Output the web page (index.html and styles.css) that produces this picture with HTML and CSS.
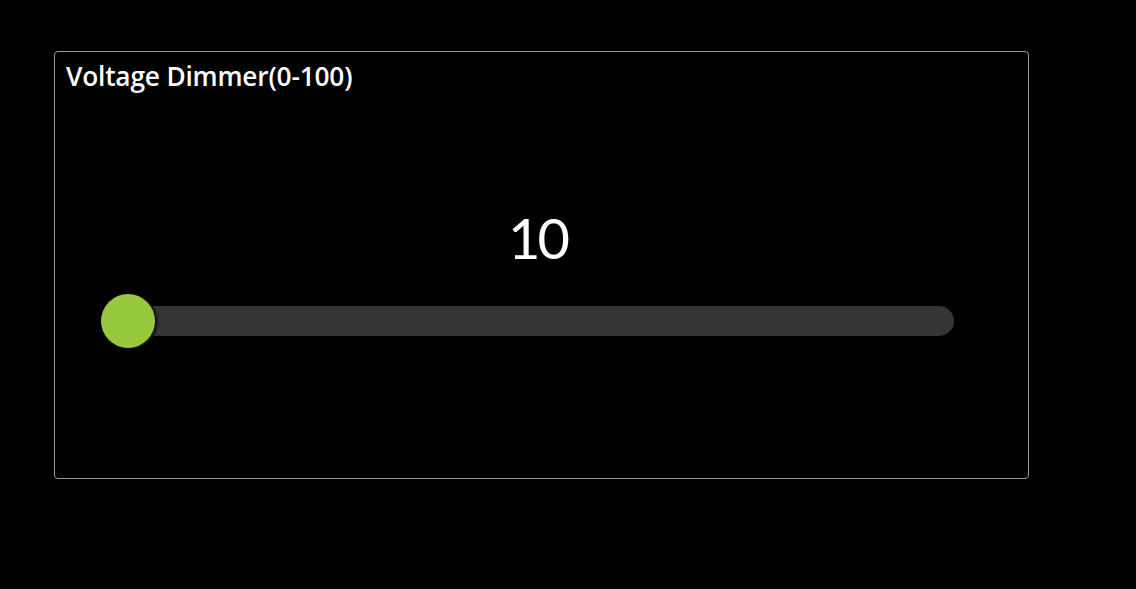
FILE: index.html
```html
<!DOCTYPE html>
<html>
<head>
<meta charset="utf-8">
<link rel="stylesheet" href="styles.css">
</head>
<body>
<div class="card">
  <div class="title">Voltage Dimmer(0-100)</div>
  <div class="value">10</div>
  <div class="slider">
    <div class="track"></div>
    <div class="thumb"></div>
  </div>
</div>
</body>
</html>
```
FILE: styles.css
```css
html, body {
  margin: 0;
  padding: 0;
  background: #000;
}
body {
  padding: 51px 0 0 54px;
  font-family: Lato, "Open Sans", sans-serif;
  color: #fff;
}
.card {
  box-sizing: border-box;
  width: 975px;
  height: 428px;
  border: 1px solid #9a9a9a;
  border-radius: 4px;
  padding: 8px 11px 10px;
}
.title {
  font-family: "Open Sans", sans-serif;
  font-size: 26.3px;
  font-weight: 600;
  line-height: 32px;
  letter-spacing: -0.2px;
}
.value {
  margin-top: 116px;
  padding-right: 8px;
  text-align: center;
  font-size: 56px;
  font-weight: 400;
  line-height: 60px;
  letter-spacing: -3px;
}
.slider {
  position: relative;
  margin: 26px 0 0 35px;
  width: 853px;
  height: 54px;
  display: flex;
  align-items: center;
}
.track {
  width: 100%;
  height: 30px;
  border-radius: 15px;
  background: #353535;
}
.thumb {
  position: absolute;
  left: 0;
  top: 0;
  width: 54px;
  height: 54px;
  border-radius: 50%;
  background: #98c93c;
  box-shadow: 3px 1px 2px rgba(20,20,20,0.9);
}
```
